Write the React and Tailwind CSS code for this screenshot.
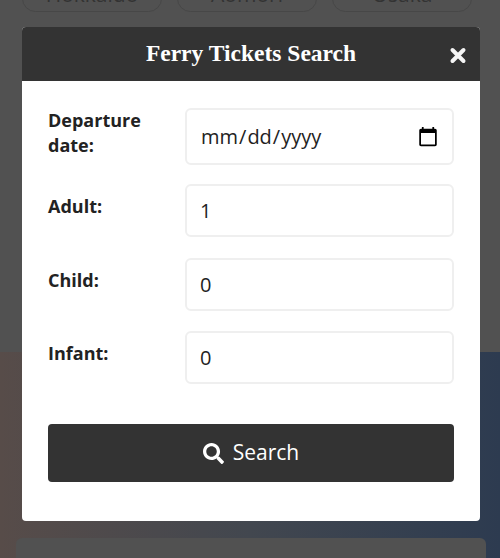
import React from "react";
import { FaSearch } from "react-icons/fa";

const inputCls = "w-[269px] h-[53px] rounded-[6px] border-2 border-[#efefef] bg-white pl-[13px] pr-[14px] text-[20px] text-[#222] outline-none";

function Row({ label, value, className }) {
  return (
    <div className={`flex items-start ${className}`}>
      <label className="w-[137px] pt-[9px] text-[18px] leading-[26px] font-bold text-[#222]">{label}</label>
      <input type="number" defaultValue={value} className={inputCls} />
    </div>
  );
}

export default function App() {
  return (
    <div className="relative h-[558px] w-[500px] overflow-hidden font-['Open_Sans',sans-serif]">
      <div className="flex h-[352px] flex-col bg-[#515151] px-[22px]">
        <div className="mt-[-15px] flex gap-[15px]">
          {["Hokkaido", "Aomori", "Osaka"].map((t) => (
            <div key={t} className="flex h-[27px] w-[140px] items-center justify-center rounded-[14px] border border-[#474747] pb-[9px] text-[21px] leading-[26px] text-[#333]">{t}</div>
          ))}
        </div>
      </div>
      <div className="h-[206px] bg-gradient-to-r from-[#574c49] via-[#42474f] to-[#2d3b50] pl-[16px] pr-[14px] pt-[186px]">
        <div className="h-[40px] rounded-[6px] bg-[#515151]" />
      </div>

      <div className="absolute left-[22px] top-[27px] w-[458px] rounded-[4px] bg-white">
        <div className="relative flex h-[54px] items-center justify-center rounded-t-[4px] bg-[#333333]">
          <h2 className="font-['Liberation_Serif',serif] text-[23.5px] font-bold text-white">Ferry Tickets Search</h2>
          <span className="absolute right-[13px] top-[15px]">
            <svg width="18" height="26" viewBox="0 0 18 26"><path d="M3.5 8 L14.5 19 M14.5 8 L3.5 19" stroke="#f5f5f5" strokeWidth="4" strokeLinecap="round" /></svg>
          </span>
        </div>
        <div className="flex flex-col px-[26px] pb-[39px] pt-[27px]">
          <div className="flex items-start">
            <label className="w-[137px] pr-[20px] text-[18px] leading-[25px] font-bold text-[#222]">Departure date:</label>
            <input type="date" className="h-[57px] w-[269px] rounded-[6px] border-2 border-[#efefef] bg-white pl-[13px] pr-[13px] text-[20px] text-[#222] outline-none [&::-webkit-calendar-picker-indicator]:h-[22px] [&::-webkit-calendar-picker-indicator]:w-[22px] [&::-webkit-calendar-picker-indicator]:p-0" />
          </div>
          <Row label="Adult:" value="1" className="mt-[19px]" />
          <Row label="Child:" value="0" className="mt-[20.5px]" />
          <Row label="Infant:" value="0" className="mt-[20.5px]" />
          <button className="mt-[40px] flex h-[58px] w-[406px] items-center justify-center gap-[9px] rounded-[4px] bg-[#333333] text-[21px] text-white">
            <FaSearch className="text-[21px]" />
            <span>Search</span>
          </button>
        </div>
      </div>
    </div>
  );
}
